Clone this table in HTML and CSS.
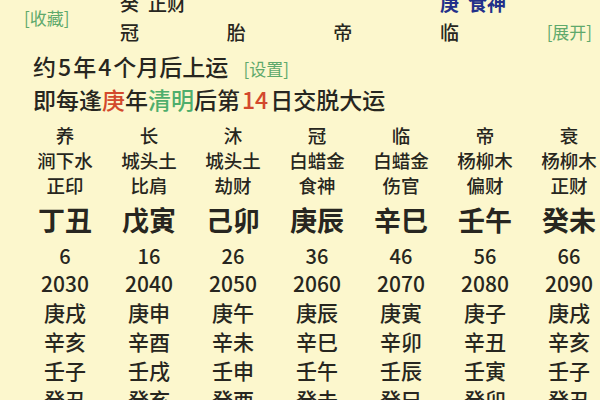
FILE: index.html
```html
<!DOCTYPE html>
<html lang="zh">
<head>
<meta charset="utf-8">
<link rel="stylesheet" href="styles.css">
</head>
<body>
<div class="page">
  <div class="pillars">
    <div class="fav link">[收藏]</div>
    <div class="cell"><span class="gan">癸</span>正财</div>
    <div class="cell"></div>
    <div class="cell"></div>
    <div class="cell blue"><span class="gan">庚</span>食神</div>
    <div class="spacer"></div>
    <div class="cell">冠</div>
    <div class="cell">胎</div>
    <div class="cell">帝</div>
    <div class="cell">临</div>
    <div class="expand link">[展开]</div>
  </div>

  <div class="info">
    <div class="line">约<span class="num">5</span>年<span class="num">4</span>个月后上运 <span class="link small">[设置]</span></div>
    <div class="line">即每逢<span class="red">庚</span>年<span class="green">清明</span>后第<span class="red num">14</span>日交脱大运</div>
  </div>

  <div class="luck">
    <div class="r ss">养</div><div class="r ss">长</div><div class="r ss">沐</div><div class="r ss">冠</div><div class="r ss">临</div><div class="r ss">帝</div><div class="r ss">衰</div>
    <div class="r ss">涧下水</div><div class="r ss">城头土</div><div class="r ss">城头土</div><div class="r ss">白蜡金</div><div class="r ss">白蜡金</div><div class="r ss">杨柳木</div><div class="r ss">杨柳木</div>
    <div class="r ss">正印</div><div class="r ss">比肩</div><div class="r ss">劫财</div><div class="r ss">食神</div><div class="r ss">伤官</div><div class="r ss">偏财</div><div class="r ss">正财</div>
    <div class="r gz">丁丑</div><div class="r gz">戊寅</div><div class="r gz">己卯</div><div class="r gz">庚辰</div><div class="r gz">辛巳</div><div class="r gz">壬午</div><div class="r gz">癸未</div>
    <div class="r age">6</div><div class="r age">16</div><div class="r age">26</div><div class="r age">36</div><div class="r age">46</div><div class="r age">56</div><div class="r age">66</div>
    <div class="r yr">2030</div><div class="r yr">2040</div><div class="r yr">2050</div><div class="r yr">2060</div><div class="r yr">2070</div><div class="r yr">2080</div><div class="r yr">2090</div>
    <div class="r yr">庚戌</div><div class="r yr">庚申</div><div class="r yr">庚午</div><div class="r yr">庚辰</div><div class="r yr">庚寅</div><div class="r yr">庚子</div><div class="r yr">庚戌</div>
    <div class="r yr">辛亥</div><div class="r yr">辛酉</div><div class="r yr">辛未</div><div class="r yr">辛巳</div><div class="r yr">辛卯</div><div class="r yr">辛丑</div><div class="r yr">辛亥</div>
    <div class="r yr">壬子</div><div class="r yr">壬戌</div><div class="r yr">壬申</div><div class="r yr">壬午</div><div class="r yr">壬辰</div><div class="r yr">壬寅</div><div class="r yr">壬子</div>
    <div class="r yr">癸丑</div><div class="r yr">癸亥</div><div class="r yr">癸酉</div><div class="r yr">癸未</div><div class="r yr">癸巳</div><div class="r yr">癸卯</div><div class="r yr">癸丑</div>
  </div>
</div>
</body>
</html>
```

FILE: styles.css
```css
html, body {
  margin: 0;
  padding: 0;
  background: #fcf7cd;
  overflow: hidden;
}
body {
  width: 600px;
  height: 400px;
  font-family: "Noto Sans CJK SC", "Noto Sans", sans-serif;
  font-weight: 500;
  color: #272620;
}
.page {
  width: 600px;
  height: 400px;
  overflow: hidden;
}
.pillars {
  display: grid;
  grid-template-columns: 120px repeat(4, 106.67px) 1fr;
  grid-template-rows: 29px 29px;
  margin-top: -12px;
  font-size: 19px;
  line-height: 29px;
}
.pillars .cell {
  white-space: nowrap;
}
.gan {
  margin-right: 9px;
}
.fav {
  grid-row: 1 / 3;
  grid-column: 1;
  align-self: center;
  padding-left: 24px;
  white-space: nowrap;
}
.expand {
  grid-column: 6;
  grid-row: 2;
  justify-self: end;
  padding-right: 9px;
  white-space: nowrap;
}
.link {
  color: #5fa96c;
  font-size: 17px;
  font-weight: 400;
}
.blue {
  color: #23308a;
  font-weight: bold;
}
.info {
  margin-top: 5px;
  padding-left: 33px;
  font-size: 23px;
  line-height: 30px;
}
.info .num {
  margin: 0 2px;
}
.info .small {
  margin-left: 10px;
  font-size: 17px;
}
.red { color: #d3492c; }
.green { color: #4fae6c; }
.luck {
  display: grid;
  grid-template-columns: repeat(7, 84px);
  padding-left: 23px;
  margin-top: 9px;
  width: 588px;
}
.r {
  text-align: center;
  white-space: nowrap;
}
.ss {
  font-size: 18.5px;
  line-height: 25px;
}
.gz {
  font-size: 27px;
  font-weight: bold;
  line-height: 44px;
}
.age {
  font-size: 20px;
  line-height: 27px;
}
.yr {
  font-size: 21px;
  line-height: 29px;
}
```
